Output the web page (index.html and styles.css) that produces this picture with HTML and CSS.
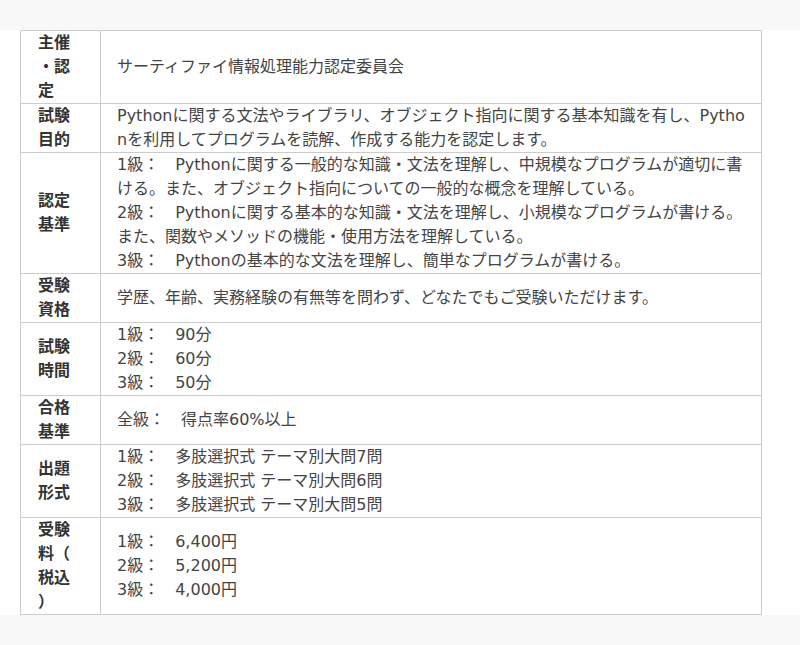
FILE: index.html
```html
<!DOCTYPE html>
<html lang="ja">
<head>
<meta charset="utf-8">
<title>Python試験概要</title>
<link rel="stylesheet" href="styles.css">
</head>
<body>
<div class="top"></div>
<div class="content">
<table class="info">
<tr><th>主催・認定</th><td>サーティファイ情報処理能力認定委員会</td></tr>
<tr><th>試験目的</th><td>Pythonに関する文法やライブラリ、オブジェクト指向に関する基本知識を有し、Pythonを利用してプログラムを読解、作成する能力を認定します。</td></tr>
<tr><th>認定基準</th><td>1級：　Pythonに関する一般的な知識・文法を理解し、中規模なプログラムが適切に書ける。また、オブジェクト指向についての一般的な概念を理解している。<br>2級：　Pythonに関する基本的な知識・文法を理解し、小規模なプログラムが書ける。また、関数やメソッドの機能・使用方法を理解している。<br>3級：　Pythonの基本的な文法を理解し、簡単なプログラムが書ける。</td></tr>
<tr><th>受験資格</th><td>学歴、年齢、実務経験の有無等を問わず、どなたでもご受験いただけます。</td></tr>
<tr><th>試験時間</th><td>1級：　90分<br>2級：　60分<br>3級：　50分</td></tr>
<tr><th>合格基準</th><td>全級：　得点率60%以上</td></tr>
<tr><th>出題形式</th><td>1級：　多肢選択式 テーマ別大問7問<br>2級：　多肢選択式 テーマ別大問6問<br>3級：　多肢選択式 テーマ別大問5問</td></tr>
<tr><th>受験料（税込）</th><td>1級：　6,400円<br>2級：　5,200円<br>3級：　4,000円</td></tr>
</table>
</div>
<div class="bottom"></div>
</body>
</html>
```
FILE: styles.css
```css
html, body {
  margin: 0;
  padding: 0;
  background: #f8f8f8;
}
body {
  font-family: "DejaVu Sans", "Noto Sans CJK JP", sans-serif;
  font-size: 16px;
  line-height: 24px;
  color: #333;
}
.top {
  height: 30px;
}
.content {
  background: #fff;
  padding: 0 38px 0 20px;
}
.info {
  width: 742px;
  border-collapse: collapse;
  table-layout: fixed;
}
.info th,
.info td {
  border: 1px solid #ccc;
  vertical-align: middle;
  text-align: left;
  word-break: break-all;
  line-break: anywhere;
}
.info th {
  width: 36px;
  padding: 0 26px 0 17px;
  font-weight: bold;
  color: #333;
}
.info td {
  padding: 0 16px;
  color: #444;
}
.bottom {
  height: 40px;
}
```
